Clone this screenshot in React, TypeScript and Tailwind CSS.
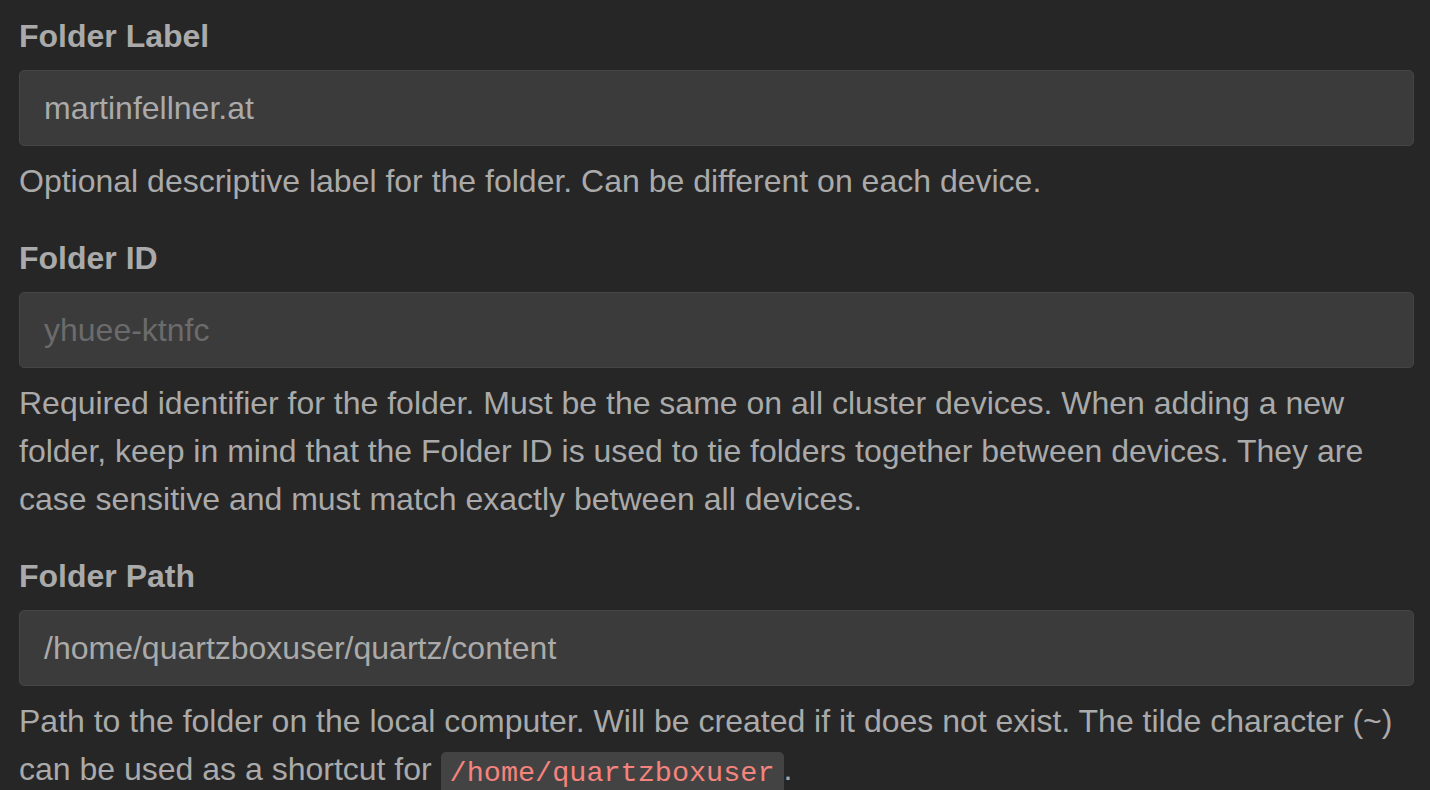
import React from "react";

function Field({
  label,
  value,
  muted,
  children,
  first,
}: {
  label: string;
  value: string;
  muted?: boolean;
  children: React.ReactNode;
  first?: boolean;
}) {
  return (
    <div className={first ? "" : "mt-[30.5px]"}>
      <label className="block font-bold leading-[45px] mb-[11.5px]">{label}</label>
      <div
        className={
          "h-[76px] flex items-center border border-[#454545] bg-[#3b3b3b] rounded-[5px] px-[24px] " +
          (muted ? "text-[#6b6b6b]" : "text-[#aaaaaa]")
        }
      >
        {value}
      </div>
      <p className="mt-[11px] leading-[48px]">{children}</p>
    </div>
  );
}

export default function App() {
  return (
    <div className="h-[790px] overflow-hidden bg-[#262626] pl-[19px] pr-[16px] pt-[13.5px] font-['Liberation_Sans',Arial,sans-serif] text-[32px] text-[#aaaaaa]">
      <Field first label="Folder Label" value="martinfellner.at">
        Optional descriptive label for the folder. Can be different on each device.
      </Field>
      <Field label="Folder ID" value="yhuee-ktnfc" muted>
        Required identifier for the folder. Must be the same on all cluster devices. When adding a new
        folder, keep in mind that the Folder ID is used to tie folders together between devices. They are
        case sensitive and must match exactly between all devices.
      </Field>
      <Field label="Folder Path" value="/home/quartzboxuser/quartz/content">
        Path to the folder on the local computer. Will be created if it does not exist. The tilde character (~)
        can be used as a shortcut for{" "}
        <code className="font-['Liberation_Mono',monospace] text-[28.5px] bg-[#434343] text-[#f5837e] rounded-[5px] px-[9px] py-[4.5px]">
          /home/quartzboxuser
        </code>
        .
      </Field>
    </div>
  );
}
